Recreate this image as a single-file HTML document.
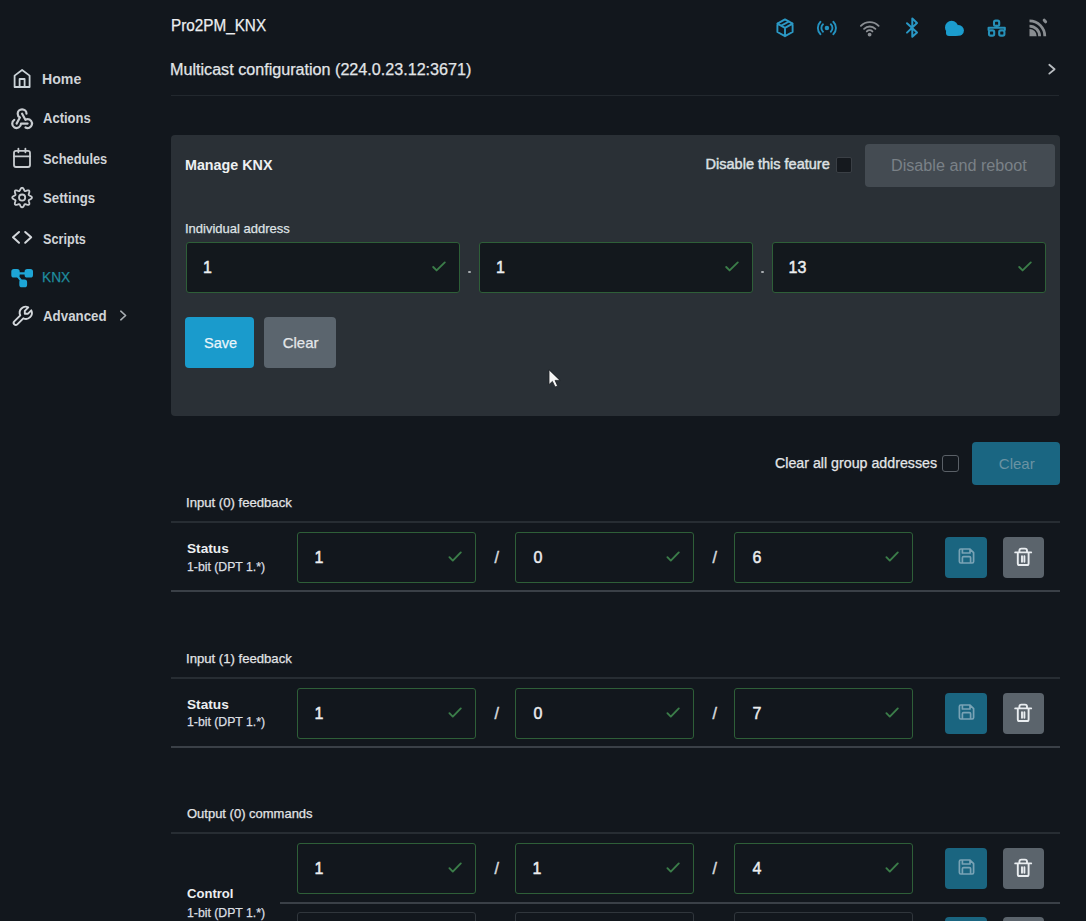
<!DOCTYPE html>
<html><head><meta charset="utf-8">
<style>
*{box-sizing:border-box;margin:0;padding:0}
html,body{width:1086px;height:921px;overflow:hidden;background:#12171d;font-family:"Liberation Sans",sans-serif;color:#e4e6e8}
.abs{position:absolute}
.t{position:absolute;white-space:nowrap;line-height:1;transform-origin:0 0}
.ico{position:absolute}
.card{position:absolute;left:171px;top:135px;width:889px;height:281px;background:#2a3036;border-radius:4px}
.inp{position:absolute;border:1px solid #2e5f38;border-radius:3px;background:#13181d}
.btn{position:absolute;border-radius:4px}
.line{position:absolute;height:2px}
#ov{position:absolute;left:0;top:0}
</style></head><body>

<div class="line" style="left:171px;top:95px;width:888px;height:1px;background:#22282e"></div>

<!-- card -->
<div class="card"></div>
<div class="abs" style="left:836px;top:157px;width:16px;height:16px;background:#15191e;border:1px solid #3a3f45;border-radius:2px"></div>
<div class="btn" style="left:865px;top:144px;width:190px;height:43px;background:#444b52"></div>

<div class="inp" style="left:186px;top:242px;width:274px;height:51px"></div>
<div class="inp" style="left:479px;top:242px;width:274px;height:51px"></div>
<div class="inp" style="left:772px;top:242px;width:274px;height:51px"></div>
<div class="abs" style="left:468px;top:270.5px;width:2.5px;height:2.5px;background:#a9adb1;border-radius:1px"></div>
<div class="abs" style="left:761px;top:270.5px;width:2.5px;height:2.5px;background:#a9adb1;border-radius:1px"></div>

<div class="btn" style="left:185px;top:317px;width:69px;height:51px;background:#1a9bcc"></div>
<div class="btn" style="left:264px;top:317px;width:72px;height:51px;background:#5b656e"></div>

<!-- group addresses -->
<div class="abs" style="left:942px;top:455px;width:17px;height:17px;border:1.5px solid #5a6067;border-radius:3px;background:#12171d"></div>
<div class="btn" style="left:972px;top:442px;width:88px;height:43px;background:#1a6682"></div>

<div class="line" style="left:171px;top:521px;width:889px;background:#272d33"></div>
<div class="inp" style="left:297px;top:532px;width:179px;height:51px;background:#12171d;"></div>
<div class="inp" style="left:515px;top:532px;width:179px;height:51px;background:#12171d;"></div>
<div class="inp" style="left:734px;top:532px;width:179px;height:51px;background:#12171d;"></div>
<div class="btn" style="left:945px;top:537px;width:42px;height:41px;background:#1a6580"></div>
<div class="btn" style="left:1003px;top:537px;width:41px;height:41px;background:#5b646c"></div>
<div class="line" style="left:171px;top:590px;width:889px;background:#3a4047"></div>
<div class="line" style="left:171px;top:677px;width:889px;background:#272d33"></div>
<div class="inp" style="left:297px;top:688px;width:179px;height:51px;background:#12171d;"></div>
<div class="inp" style="left:515px;top:688px;width:179px;height:51px;background:#12171d;"></div>
<div class="inp" style="left:734px;top:688px;width:179px;height:51px;background:#12171d;"></div>
<div class="btn" style="left:945px;top:693px;width:42px;height:41px;background:#1a6580"></div>
<div class="btn" style="left:1003px;top:693px;width:41px;height:41px;background:#5b646c"></div>
<div class="line" style="left:171px;top:746px;width:889px;background:#3a4047"></div>
<div class="line" style="left:171px;top:832px;width:889px;background:#272d33"></div>
<div class="inp" style="left:297px;top:843px;width:179px;height:51px;background:#12171d;"></div>
<div class="inp" style="left:515px;top:843px;width:179px;height:51px;background:#12171d;"></div>
<div class="inp" style="left:734px;top:843px;width:179px;height:51px;background:#12171d;"></div>
<div class="btn" style="left:945px;top:848px;width:42px;height:41px;background:#1a6580"></div>
<div class="btn" style="left:1003px;top:848px;width:41px;height:41px;background:#5b646c"></div>
<div class="line" style="left:280px;top:902px;width:780px;background:#3a4047"></div>
<div class="inp" style="left:297px;top:912px;width:179px;height:51px;background:#12171d;border-color:#30363c;"></div>
<div class="inp" style="left:515px;top:912px;width:179px;height:51px;background:#12171d;border-color:#30363c;"></div>
<div class="inp" style="left:734px;top:912px;width:179px;height:51px;background:#12171d;border-color:#30363c;"></div>
<div class="btn" style="left:945px;top:917px;width:42px;height:41px;background:#1a6580"></div>
<div class="btn" style="left:1003px;top:917px;width:41px;height:41px;background:#5b646c"></div>

<svg id="ov" width="1086" height="921" viewBox="0 0 1086 921" fill="none" stroke-linecap="round" stroke-linejoin="round">
 <!-- sidebar icons -->
 <g stroke="#cbd3d8" stroke-width="1.8">
  <path d="M14.6 87 V75.6 L22.1 70 L29.6 75.6 V87 Z"/>
  <path d="M19.6 87 V79 H24.6 V87"/>
 </g>
 <g stroke="#c8ccd0" stroke-width="2">
  <g transform="translate(8.9,104.9) scale(1.1)">
   <path d="M4.876 13.61a4 4 0 1 0 6.124 3.39h6"/>
   <path d="M15.066 20.502a4 4 0 1 0 1.934 -7.502c-.706 0 -1.424 .179 -2 .5l-3 -5.5"/>
   <path d="M16 8a4 4 0 1 0 -8 0c0 1.506 .77 2.818 2 3.5l-3 5.5"/>
  </g>
 </g>
 <g stroke="#c8ccd0" stroke-width="1.8">
  <rect x="14" y="150.8" width="16" height="16.2" rx="2"/>
  <path d="M14 156.4 H30 M18.4 148.6 V152.3 M25.4 148.6 V152.3"/>
 </g>
 <g stroke="#c8ccd0" stroke-width="1.8">
  <path d="M22.10 187.75 L22.73 187.95 L23.30 188.50 L23.76 189.26 L24.13 190.04 L24.46 190.66 L24.84 190.99 L25.34 191.03 L26.01 190.82 L26.82 190.53 L27.69 190.32 L28.48 190.33 L29.07 190.63 L29.37 191.22 L29.38 192.01 L29.17 192.88 L28.88 193.69 L28.67 194.36 L28.71 194.86 L29.04 195.24 L29.66 195.57 L30.44 195.94 L31.20 196.40 L31.75 196.97 L31.95 197.60 L31.75 198.23 L31.20 198.80 L30.44 199.26 L29.66 199.63 L29.04 199.96 L28.71 200.34 L28.67 200.84 L28.88 201.51 L29.17 202.32 L29.38 203.19 L29.37 203.98 L29.07 204.57 L28.48 204.87 L27.69 204.88 L26.82 204.67 L26.01 204.38 L25.34 204.17 L24.84 204.21 L24.46 204.54 L24.13 205.16 L23.76 205.94 L23.30 206.70 L22.73 207.25 L22.10 207.45 L21.47 207.25 L20.90 206.70 L20.44 205.94 L20.07 205.16 L19.74 204.54 L19.36 204.21 L18.86 204.17 L18.19 204.38 L17.38 204.67 L16.51 204.88 L15.72 204.87 L15.13 204.57 L14.83 203.98 L14.82 203.19 L15.03 202.32 L15.32 201.51 L15.53 200.84 L15.49 200.34 L15.16 199.96 L14.54 199.63 L13.76 199.26 L13.00 198.80 L12.45 198.23 L12.25 197.60 L12.45 196.97 L13.00 196.40 L13.76 195.94 L14.54 195.57 L15.16 195.24 L15.49 194.86 L15.53 194.36 L15.32 193.69 L15.03 192.88 L14.82 192.01 L14.83 191.22 L15.13 190.63 L15.72 190.33 L16.51 190.32 L17.38 190.53 L18.19 190.82 L18.86 191.03 L19.36 190.99 L19.74 190.66 L20.07 190.04 L20.44 189.26 L20.90 188.50 L21.47 187.95 Z"/>
  <circle cx="22.1" cy="197.6" r="3.1"/>
 </g>
 <path d="M19 232 L13 237.3 L19 242.8 M25.2 232 L31.2 237.3 L25.2 242.8" stroke="#d3d7db" stroke-width="2"/>
 <g fill="#1ea6d6" stroke="#1ea6d6" stroke-width="2.2">
  <rect x="12.4" y="270" width="6.2" height="6.4" rx="1.5"/>
  <rect x="25.7" y="270" width="6.2" height="6.4" rx="1.5"/>
  <rect x="20.4" y="280.6" width="5.6" height="5.6" rx="1.5"/>
  <path d="M15.5 273.3 H29 M15.5 273.3 L23.2 283.4"/>
 </g>
 <g transform="translate(34.8,303.8) scale(-1,1)" stroke="#d3d7db" stroke-width="1.9">
  <path d="M7 10h3v-3l-3.5 -3.5a6 6 0 0 1 8 8l6 6a2 2 0 0 1 -3 3l-6 -6a6 6 0 0 1 -8 -8l3.5 3.5"/>
 </g>
 <path d="M120.8 311.2 L125.6 315.5 L120.8 319.8" stroke="#a9aeb3" stroke-width="1.6"/>
 <!-- header chevron -->
 <path d="M1049.3 64.8 L1054.6 69.2 L1049.3 73.6" stroke="#b9bdc1" stroke-width="1.8"/>

 <!-- status icons -->
 <g stroke="#2b98c4" stroke-width="1.9">
  <path d="M785 19.4 L792.6 23.6 V32 L785 36.2 L777.4 32 V23.6 Z M777.4 23.6 L785 27.8 L792.6 23.6 M785 27.8 V36.2 M789 21.5 L781.2 25.7"/>
 </g>
 <g stroke="#2492c0" stroke-width="1.9">
  <circle cx="826.9" cy="28" r="1.3" fill="#2a9ac6"/>
  <path d="M823 24.3 A5 5 0 0 0 823 31.7 M830.8 24.3 A5 5 0 0 1 830.8 31.7 M820.5 21.8 A8.6 8.6 0 0 0 820.5 34.2 M833.3 21.8 A8.6 8.6 0 0 1 833.3 34.2"/>
 </g>
 <g stroke="#8a8e93" stroke-width="1.9">
  <path d="M860.9 25.8 A12.5 12.5 0 0 1 878.6 25.8 M864.1 28.8 A8 8 0 0 1 875.4 28.8 M866.8 31.4 A4 4 0 0 1 872.4 31.4"/>
  <circle cx="869.6" cy="34.6" r="1" fill="#8a8e93"/>
 </g>
 <path d="M907 23.2 L917 32.6 L912.3 36.8 V18.4 L917 23 L907 32.6" stroke="#2998c6" stroke-width="2"/>
 <g fill="#1b9ccd"><circle cx="951.6" cy="27.4" r="6.6"/><circle cx="958.6" cy="30.4" r="5.3"/><rect x="946" y="29" width="13" height="6.9" rx="3"/></g>
 <g stroke="#2690b8" stroke-width="2.1">
  <rect x="994" y="20.6" width="5.2" height="5.2" rx="1.6"/>
  <rect x="989" y="30.4" width="5.2" height="5.2" rx="1.6"/>
  <rect x="999.2" y="30.4" width="5.2" height="5.2" rx="1.6"/>
  <path d="M996.6 25.8 V27.8 M988.6 30 V27.8 H1004.8 V30"/>
 </g>
 <g stroke="#898d91" fill="none">
  <path d="M1029.5 36.2 V29 A7.2 7.2 0 0 1 1036.7 36.2 Z" fill="#898d91" stroke="none"/>
  <path d="M1029.5 26.1 A10.1 10.1 0 0 1 1039.6 36.2" stroke-width="2.8" stroke-linecap="butt"/>
  <path d="M1029.5 20.9 A15.3 15.3 0 0 1 1044.8 36.2" stroke-width="2.8" stroke-linecap="butt"/>
  <path d="M1044.2 20.2 L1045.6 21.8" stroke-width="3"/>
 </g>

 <!-- card checks -->
 <g stroke="#3b7d49" stroke-width="1.9">
  <path d="M433.2 267 L436.6 270.4 L444.8 262.4"/>
  <path d="M726.2 267 L729.6 270.4 L737.8 262.4"/>
  <path d="M1019.2 267 L1022.6 270.4 L1030.8 262.4"/>
 </g>

 <path d="M449.4 557.2 L452.8 560.6 L460.8 552.4" stroke="#3b7d49" stroke-width="1.9"/>
<path d="M667.4 557.2 L670.8 560.6 L678.8 552.4" stroke="#3b7d49" stroke-width="1.9"/>
<path d="M886.4 557.2 L889.8 560.6 L897.8 552.4" stroke="#3b7d49" stroke-width="1.9"/>
<g transform="translate(945,535)" stroke="#79a3b5" stroke-width="1.7"><path d="M15.8 14 H25 L28.6 17.6 V26.6 Q28.6 28 27.2 28 H15.8 Q14.4 28 14.4 26.6 V15.4 Q14.4 14 15.8 14 Z M17.4 14.4 V18 H25 V14.4 M17.4 27.8 V22.8 Q17.4 21.6 18.6 21.6 H24.4 Q25.6 21.6 25.6 22.8 V27.8"/></g>
<g transform="translate(1003,532)" stroke="#e9edf0" stroke-width="1.9"><path d="M12.2 20.4 H28.2 M16.4 20.4 V18.6 Q16.4 16.6 18.4 16.6 H22 Q24 16.6 24 18.6 V20.4 M14.8 20.4 V31.4 Q14.8 33 16.4 33 H24 Q25.6 33 25.6 31.4 V20.4 M19 24.3 V29.8 M21.4 24.3 V29.8"/></g>
<path d="M449.4 713.2 L452.8 716.6 L460.8 708.4" stroke="#3b7d49" stroke-width="1.9"/>
<path d="M667.4 713.2 L670.8 716.6 L678.8 708.4" stroke="#3b7d49" stroke-width="1.9"/>
<path d="M886.4 713.2 L889.8 716.6 L897.8 708.4" stroke="#3b7d49" stroke-width="1.9"/>
<g transform="translate(945,691)" stroke="#79a3b5" stroke-width="1.7"><path d="M15.8 14 H25 L28.6 17.6 V26.6 Q28.6 28 27.2 28 H15.8 Q14.4 28 14.4 26.6 V15.4 Q14.4 14 15.8 14 Z M17.4 14.4 V18 H25 V14.4 M17.4 27.8 V22.8 Q17.4 21.6 18.6 21.6 H24.4 Q25.6 21.6 25.6 22.8 V27.8"/></g>
<g transform="translate(1003,688)" stroke="#e9edf0" stroke-width="1.9"><path d="M12.2 20.4 H28.2 M16.4 20.4 V18.6 Q16.4 16.6 18.4 16.6 H22 Q24 16.6 24 18.6 V20.4 M14.8 20.4 V31.4 Q14.8 33 16.4 33 H24 Q25.6 33 25.6 31.4 V20.4 M19 24.3 V29.8 M21.4 24.3 V29.8"/></g>
<path d="M449.4 868.2 L452.8 871.6 L460.8 863.4" stroke="#3b7d49" stroke-width="1.9"/>
<path d="M667.4 868.2 L670.8 871.6 L678.8 863.4" stroke="#3b7d49" stroke-width="1.9"/>
<path d="M886.4 868.2 L889.8 871.6 L897.8 863.4" stroke="#3b7d49" stroke-width="1.9"/>
<g transform="translate(945,846)" stroke="#79a3b5" stroke-width="1.7"><path d="M15.8 14 H25 L28.6 17.6 V26.6 Q28.6 28 27.2 28 H15.8 Q14.4 28 14.4 26.6 V15.4 Q14.4 14 15.8 14 Z M17.4 14.4 V18 H25 V14.4 M17.4 27.8 V22.8 Q17.4 21.6 18.6 21.6 H24.4 Q25.6 21.6 25.6 22.8 V27.8"/></g>
<g transform="translate(1003,843)" stroke="#e9edf0" stroke-width="1.9"><path d="M12.2 20.4 H28.2 M16.4 20.4 V18.6 Q16.4 16.6 18.4 16.6 H22 Q24 16.6 24 18.6 V20.4 M14.8 20.4 V31.4 Q14.8 33 16.4 33 H24 Q25.6 33 25.6 31.4 V20.4 M19 24.3 V29.8 M21.4 24.3 V29.8"/></g>
<g transform="translate(945,915)" stroke="#79a3b5" stroke-width="1.7"><path d="M15.8 14 H25 L28.6 17.6 V26.6 Q28.6 28 27.2 28 H15.8 Q14.4 28 14.4 26.6 V15.4 Q14.4 14 15.8 14 Z M17.4 14.4 V18 H25 V14.4 M17.4 27.8 V22.8 Q17.4 21.6 18.6 21.6 H24.4 Q25.6 21.6 25.6 22.8 V27.8"/></g>
<g transform="translate(1003,912)" stroke="#e9edf0" stroke-width="1.9"><path d="M12.2 20.4 H28.2 M16.4 20.4 V18.6 Q16.4 16.6 18.4 16.6 H22 Q24 16.6 24 18.6 V20.4 M14.8 20.4 V31.4 Q14.8 33 16.4 33 H24 Q25.6 33 25.6 31.4 V20.4 M19 24.3 V29.8 M21.4 24.3 V29.8"/></g>

 <!-- cursor -->
 <path d="M549 370 V384.6 L552.4 381.4 L555.1 387 L557.6 385.9 L555.1 380.4 H559.8 Z" fill="#f6f6f6" stroke="#1e2226" stroke-width="0.8" stroke-linejoin="miter"/>
</svg>

<div class="t" style="left:42.06px;top:70.80px;font-size:15px;font-weight:700;color:#cfd3d7;transform:scaleX(0.9415);">Home</div>
<div class="t" style="left:43.00px;top:110.40px;font-size:15px;font-weight:700;color:#cfd3d7;transform:scaleX(0.8673);">Actions</div>
<div class="t" style="left:43.00px;top:151.30px;font-size:15px;font-weight:700;color:#cfd3d7;transform:scaleX(0.8560);">Schedules</div>
<div class="t" style="left:43.00px;top:190.40px;font-size:15px;font-weight:700;color:#cfd3d7;transform:scaleX(0.8814);">Settings</div>
<div class="t" style="left:43.00px;top:230.70px;font-size:15px;font-weight:700;color:#cfd3d7;transform:scaleX(0.8431);">Scripts</div>
<div class="t" style="left:42.09px;top:268.80px;font-size:15px;font-weight:400;color:#1f8c9e;transform:scaleX(0.9133);-webkit-text-stroke:0.25px currentColor;">KNX</div>
<div class="t" style="left:43.00px;top:308.00px;font-size:15px;font-weight:700;color:#cfd3d7;transform:scaleX(0.8873);">Advanced</div>
<div class="t" style="left:170.55px;top:18.10px;font-size:16px;font-weight:400;color:#eceef0;transform:scaleX(0.9545);-webkit-text-stroke:0.25px currentColor;">Pro2PM_KNX</div>
<div class="t" style="left:170.49px;top:61.50px;font-size:16px;font-weight:400;color:#e2e5e8;transform:scaleX(1.0084);-webkit-text-stroke:0.25px currentColor;">Multicast configuration (224.0.23.12:3671)</div>
<div class="t" style="left:185.01px;top:157.90px;font-size:14.5px;font-weight:700;color:#eef0f2;transform:scaleX(0.9864);">Manage KNX</div>
<div class="t" style="left:705.60px;top:156.90px;font-size:14.5px;font-weight:400;color:#dde0e3;-webkit-text-stroke:0.45px currentColor;">Disable this feature</div>
<div class="t" style="left:891.49px;top:158.40px;font-size:16px;font-weight:400;color:#7a8187;transform:scaleX(1.0112);">Disable and reboot</div>
<div class="t" style="left:185.04px;top:221.80px;font-size:13.5px;font-weight:400;color:#dfe2e5;transform:scaleX(0.9630);-webkit-text-stroke:0.25px currentColor;">Individual address</div>
<div class="t" style="left:203.00px;top:259.60px;font-size:16px;font-weight:400;color:#eceef0;-webkit-text-stroke:0.45px currentColor;">1</div>
<div class="t" style="left:496.00px;top:259.60px;font-size:16px;font-weight:400;color:#eceef0;-webkit-text-stroke:0.45px currentColor;">1</div>
<div class="t" style="left:788.50px;top:259.60px;font-size:16px;font-weight:400;color:#eceef0;-webkit-text-stroke:0.45px currentColor;">13</div>
<div class="t" style="left:203.50px;top:334.80px;font-size:15px;font-weight:400;color:#e9f5fa;transform:scaleX(0.9706);-webkit-text-stroke:0.25px currentColor;">Save</div>
<div class="t" style="left:282.70px;top:334.80px;font-size:15px;font-weight:400;color:#e4e7ea;-webkit-text-stroke:0.25px currentColor;">Clear</div>
<div class="t" style="left:774.60px;top:455.50px;font-size:14px;font-weight:400;color:#e4e6e8;transform:scaleX(1.0156);-webkit-text-stroke:0.25px currentColor;">Clear all group addresses</div>
<div class="t" style="left:998.80px;top:455.50px;font-size:15px;font-weight:400;color:#6a93a3;">Clear</div>
<div class="t" style="left:186.43px;top:496.00px;font-size:13.5px;font-weight:400;color:#e2e4e6;transform:scaleX(0.9722);-webkit-text-stroke:0.25px currentColor;">Input (0) feedback</div>
<div class="t" style="left:314.50px;top:549.60px;font-size:16px;font-weight:400;color:#eceef0;-webkit-text-stroke:0.45px currentColor;">1</div>
<div class="t" style="left:533.50px;top:549.60px;font-size:16px;font-weight:400;color:#eceef0;-webkit-text-stroke:0.45px currentColor;">0</div>
<div class="t" style="left:752.50px;top:549.60px;font-size:16px;font-weight:400;color:#eceef0;-webkit-text-stroke:0.45px currentColor;">6</div>
<div class="t" style="left:494.50px;top:550.20px;font-size:16px;font-weight:400;color:#d8dbde;-webkit-text-stroke:0.45px currentColor;">/</div>
<div class="t" style="left:712.50px;top:550.20px;font-size:16px;font-weight:400;color:#d8dbde;-webkit-text-stroke:0.45px currentColor;">/</div>
<div class="t" style="left:187.40px;top:542.00px;font-size:13.5px;font-weight:700;color:#eceef0;transform:scaleX(1.0122);">Status</div>
<div class="t" style="left:187.40px;top:560.80px;font-size:12px;font-weight:400;color:#dcdfe2;transform:scaleX(1.0211);-webkit-text-stroke:0.25px currentColor;">1-bit (DPT 1.*)</div>
<div class="t" style="left:186.43px;top:651.60px;font-size:13.5px;font-weight:400;color:#e2e4e6;transform:scaleX(0.9722);-webkit-text-stroke:0.25px currentColor;">Input (1) feedback</div>
<div class="t" style="left:314.50px;top:705.60px;font-size:16px;font-weight:400;color:#eceef0;-webkit-text-stroke:0.45px currentColor;">1</div>
<div class="t" style="left:533.50px;top:705.60px;font-size:16px;font-weight:400;color:#eceef0;-webkit-text-stroke:0.45px currentColor;">0</div>
<div class="t" style="left:752.50px;top:705.60px;font-size:16px;font-weight:400;color:#eceef0;-webkit-text-stroke:0.45px currentColor;">7</div>
<div class="t" style="left:494.50px;top:706.20px;font-size:16px;font-weight:400;color:#d8dbde;-webkit-text-stroke:0.45px currentColor;">/</div>
<div class="t" style="left:712.50px;top:706.20px;font-size:16px;font-weight:400;color:#d8dbde;-webkit-text-stroke:0.45px currentColor;">/</div>
<div class="t" style="left:187.40px;top:697.60px;font-size:13.5px;font-weight:700;color:#eceef0;transform:scaleX(1.0122);">Status</div>
<div class="t" style="left:187.40px;top:716.40px;font-size:12px;font-weight:400;color:#dcdfe2;transform:scaleX(1.0211);-webkit-text-stroke:0.25px currentColor;">1-bit (DPT 1.*)</div>
<div class="t" style="left:187.40px;top:806.60px;font-size:13.5px;font-weight:400;color:#e2e4e6;transform:scaleX(0.9618);-webkit-text-stroke:0.25px currentColor;">Output (0) commands</div>
<div class="t" style="left:314.50px;top:860.60px;font-size:16px;font-weight:400;color:#eceef0;-webkit-text-stroke:0.45px currentColor;">1</div>
<div class="t" style="left:532.50px;top:860.60px;font-size:16px;font-weight:400;color:#eceef0;-webkit-text-stroke:0.45px currentColor;">1</div>
<div class="t" style="left:752.50px;top:860.60px;font-size:16px;font-weight:400;color:#eceef0;-webkit-text-stroke:0.45px currentColor;">4</div>
<div class="t" style="left:494.50px;top:861.20px;font-size:16px;font-weight:400;color:#d8dbde;-webkit-text-stroke:0.45px currentColor;">/</div>
<div class="t" style="left:712.50px;top:861.20px;font-size:16px;font-weight:400;color:#d8dbde;-webkit-text-stroke:0.45px currentColor;">/</div>
<div class="t" style="left:187.40px;top:886.80px;font-size:13.5px;font-weight:700;color:#eceef0;transform:scaleX(0.9688);">Control</div>
<div class="t" style="left:187.40px;top:907.00px;font-size:12px;font-weight:400;color:#dcdfe2;transform:scaleX(1.0211);-webkit-text-stroke:0.25px currentColor;">1-bit (DPT 1.*)</div>
</body></html>
